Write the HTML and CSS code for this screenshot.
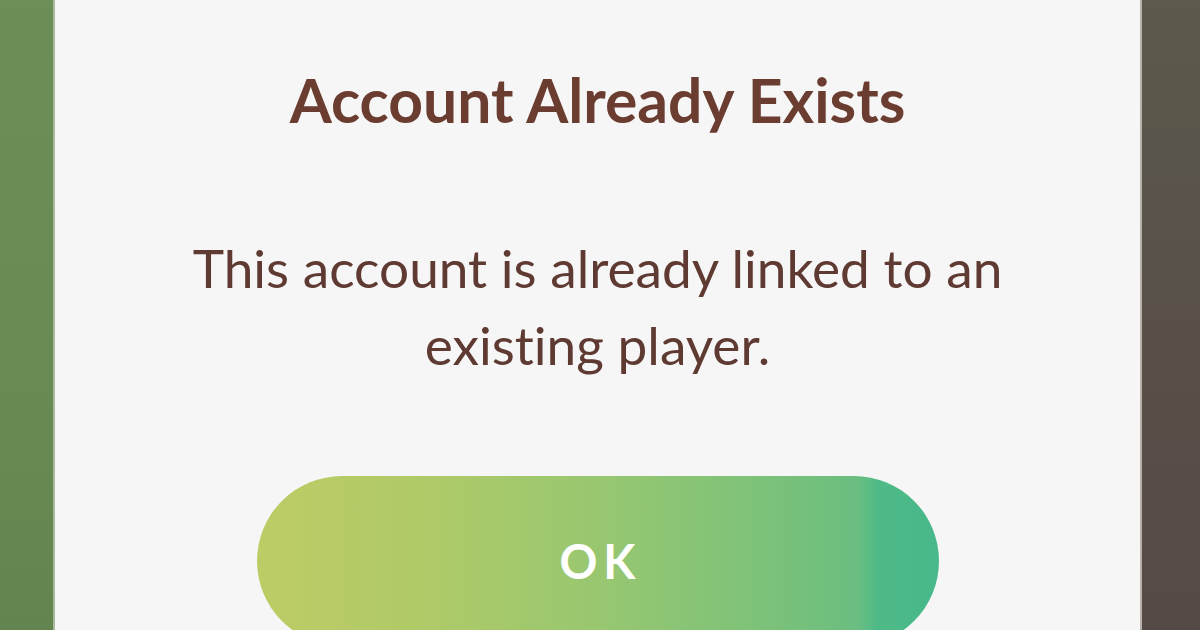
FILE: index.html
```html
<!DOCTYPE html>
<html lang="en">
<head>
<meta charset="utf-8">
<title>Account Already Exists</title>
<link rel="stylesheet" href="styles.css">
</head>
<body>
<div class="screen">
  <div class="backdrop-left"></div>
  <section class="dialog">
    <h1 class="dialog-title">Account Already Exists</h1>
    <p class="dialog-message">This account is already linked to an existing player.</p>
    <button class="dialog-button" type="button">OK</button>
  </section>
  <div class="backdrop-right"></div>
</div>
</body>
</html>
```

FILE: styles.css
```css
html, body {
  margin: 0;
  padding: 0;
  width: 1200px;
  height: 630px;
  overflow: hidden;
}

.screen {
  display: flex;
  width: 1200px;
  height: 630px;
  font-family: Lato, "Open Sans", sans-serif;
  font-variant-ligatures: none;
}

.backdrop-left {
  width: 53px;
  flex: none;
  background: linear-gradient(180deg, #6b8f56 0%, #688b53 60%, #64844f 100%);
  border-right: 2px solid #a8b89a;
}

.backdrop-right {
  flex: 1;
  background: linear-gradient(180deg, #5c5a4c 0%, #585049 50%, #564a46 100%);
  border-left: 2px solid #b8b2aa;
}

.dialog {
  width: 1085px;
  flex: none;
  background: #f7f6f6;
  display: flex;
  flex-direction: column;
  align-items: center;
  padding-top: 64px;
  box-sizing: border-box;
}

.dialog-title {
  margin: 0;
  font-size: 60.6px;
  font-weight: 700;
  color: #6b3d30;
  line-height: 72px;
}

.dialog-message {
  margin: 93px 0 0;
  width: 900px;
  text-align: center;
  font-size: 53.2px;
  font-weight: 400;
  line-height: 77px;
  color: #5e3a32;
}

.dialog-button {
  margin-top: 93px;
  width: 682px;
  height: 170px;
  flex: none;
  border: none;
  border-radius: 85px;
  background: linear-gradient(90deg, #bdcc65 0%, #afca68 25%, #98c770 50%, #78c17b 78%, #6abe80 88%, #4eba87 91%, #48b88a 100%);
  color: #ffffff;
  font-family: Lato, "Open Sans", sans-serif;
  font-size: 47px;
  font-weight: 700;
  letter-spacing: 6px;
  padding: 0 0 0 6px;
  box-sizing: border-box;
  display: flex;
  align-items: center;
  justify-content: center;
}
```
